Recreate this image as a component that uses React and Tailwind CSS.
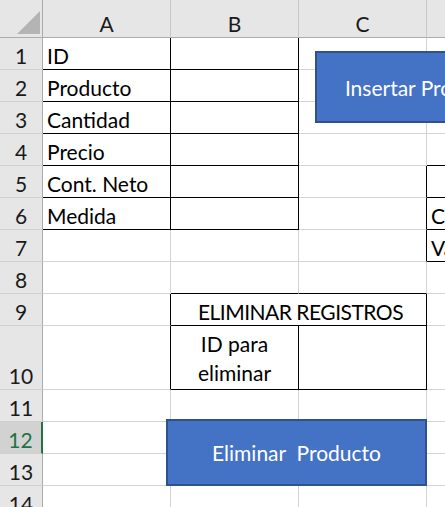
const COLS = ['A', 'B', 'C', 'D'];
const ROWS = [1, 2, 3, 4, 5, 6, 7, 8, 9, 10, 11, 12, 13, 14];

const values = {
  A1: 'ID',
  A2: 'Producto',
  A3: 'Cantidad',
  A4: 'Precio',
  A5: 'Cont. Neto',
  A6: 'Medida',
  D6: 'Cantidad',
  D7: 'Valor',
};

// black borders drawn on the right / bottom edge of a cell
const blackR = new Set(['A1', 'A2', 'A3', 'A4', 'A5', 'A6', 'B1', 'B2', 'B3', 'B4', 'B5', 'B6', 'C5', 'C6', 'C7', 'A9', 'A10', 'B10', 'C9', 'C10']);
const blackB = new Set(['A1', 'A2', 'A3', 'A4', 'A5', 'A6', 'B1', 'B2', 'B3', 'B4', 'B5', 'B6', 'D4', 'D5', 'D6', 'D7', 'B8', 'C8', 'B9', 'B10', 'C10']);

function cellBorders(key, rightKey = key) {
  const r = blackR.has(rightKey) ? 'border-r-black' : 'border-r-[#d4d4d4]';
  const b = blackB.has(key) ? 'border-b-black' : 'border-b-[#d4d4d4]';
  return `border-r border-b ${r} ${b}`;
}

function RowHeader({ n, active }) {
  return (
    <div
      className={`flex items-end justify-center pb-[3px] border-b border-b-[#d0d0d0] ${
        active
          ? 'bg-[#d2d2d2] text-[#217346] border-r-2 border-r-[#217346]'
          : 'bg-[#e6e6e6] text-[#1a1a1a] border-r border-r-[#ababab]'
      }`}
    >
      {n}
    </div>
  );
}

function Cell({ k, rightKey, span, children }) {
  return (
    <div
      className={`flex items-end pb-[3px] pl-1 whitespace-nowrap overflow-hidden ${span ? 'col-span-2 justify-center tracking-[-0.5px]' : ''} ${cellBorders(k, rightKey)}`}
    >
      {children}
    </div>
  );
}

function SheetRow({ n }) {
  const height = n === 10 ? 'h-16' : 'h-8';
  let cells;
  if (n === 9) {
    cells = (
      <>
        <Cell k="A9" />
        <Cell k="B9" rightKey="C9" span>
          ELIMINAR REGISTROS
        </Cell>
        <Cell k="D9" />
      </>
    );
  } else if (n === 10) {
    cells = (
      <>
        <Cell k="A10" />
        <div className={`flex flex-col items-center justify-end pb-[2px] leading-[29px] ${cellBorders('B10')}`}>
          <span>ID para</span>
          <span>eliminar</span>
        </div>
        <Cell k="C10" />
        <Cell k="D10" />
      </>
    );
  } else {
    cells = COLS.map((c) => (
      <Cell key={c} k={`${c}${n}`}>
        {values[`${c}${n}`]}
      </Cell>
    ));
  }
  return (
    <div className={`grid grid-cols-[43px_128px_128px_128px_128px] ${height}`}>
      <RowHeader n={n} active={n === 12} />
      {cells}
    </div>
  );
}

export default function App() {
  return (
    <div className="relative w-[445px] h-[507px] overflow-hidden bg-white text-[21px] leading-none text-black font-['Lato',sans-serif]">
      <div className="grid grid-cols-[43px_128px_128px_128px_128px] h-[38px] bg-[#e6e6e6]">
        <div className="flex items-end justify-end pr-[2px] pb-[3px] border-r border-b border-r-[#ababab] border-b-[#ababab]">
          <svg width="23" height="23" viewBox="0 0 23 23">
            <polygon points="23,0 23,23 0,23" fill="#b4b4b4" />
          </svg>
        </div>
        {COLS.map((c) => (
          <div
            key={c}
            className="flex items-end justify-center pb-[3px] text-[#1a1a1a] border-r border-b border-r-[#c8c8c8] border-b-[#ababab]"
          >
            {c}
          </div>
        ))}
      </div>

      {ROWS.map((n) => (
        <SheetRow key={n} n={n} />
      ))}

      <button className="absolute left-[315px] top-[51px] w-[220px] h-[72px] flex items-center justify-center bg-[#4472c4] border-2 border-[#2f528f] text-white whitespace-pre">
        Insertar Producto
      </button>
      <button className="absolute left-[166px] top-[419px] w-[261px] h-[67px] flex items-center justify-center bg-[#4472c4] border-2 border-[#2f528f] text-white whitespace-pre">
        Eliminar  Producto
      </button>
    </div>
  );
}
